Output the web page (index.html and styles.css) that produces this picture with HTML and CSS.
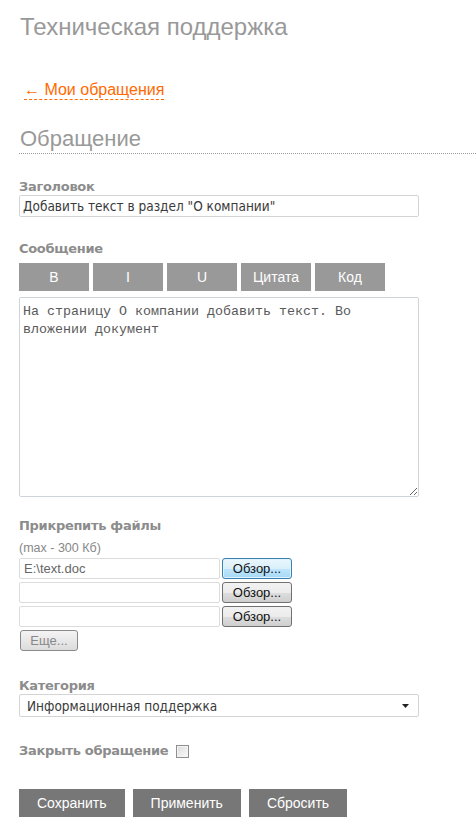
FILE: index.html
```html
<!DOCTYPE html>
<html lang="ru">
<head>
<meta charset="utf-8">
<title>Техническая поддержка</title>
<link rel="stylesheet" href="styles.css">
</head>
<body>
<div class="page">
  <h1 class="title">Техническая поддержка</h1>
  <a class="back" href="#">← Мои обращения</a>
  <h2 class="section">Обращение</h2>

  <div class="field f-title">
    <label class="label">Заголовок</label>
    <input class="text" type="text" value="Добавить текст в раздел &quot;О компании&quot;">
  </div>

  <div class="field msg">
    <label class="label">Сообщение</label>
    <div class="toolbar">
      <button class="tb" type="button">B</button>
      <button class="tb" type="button">I</button>
      <button class="tb" type="button">U</button>
      <button class="tb" type="button">Цитата</button>
      <button class="tb" type="button">Код</button>
    </div>
    <textarea class="area">На страницу О компании добавить текст. Во вложении документ</textarea>
  </div>

  <div class="field files">
    <label class="label">Прикрепить файлы</label>
    <div class="hint">(max - 300 Кб)</div>
    <div class="frow"><span class="fname">E:\text.doc</span><span class="browse focus">Обзор...</span></div>
    <div class="frow"><span class="fname"></span><span class="browse">Обзор...</span></div>
    <div class="frow"><span class="fname"></span><span class="browse">Обзор...</span></div>
    <span class="more">Еще...</span>
  </div>

  <div class="field cat">
    <label class="label">Категория</label>
    <div class="select">
      <span>Информационная поддержка</span>
      <svg class="caret" width="7" height="4" viewBox="0 0 7 4"><path d="M0 0h7L3.5 4z" fill="#222"/></svg>
    </div>
  </div>

  <div class="close">
    <span class="label">Закрыть обращение</span>
    <span class="check"></span>
  </div>

  <div class="actions">
    <button class="act" type="button">Сохранить</button>
    <button class="act" type="button">Применить</button>
    <button class="act" type="button">Сбросить</button>
  </div>
</div>
</body>
</html>
```

FILE: styles.css
```css
* { box-sizing: border-box; }
body {
  margin: 0;
  background: #fff;
  font-family: "DejaVu Sans Condensed", "DejaVu Sans", sans-serif;
  color: #888;
}
.page {
  padding: 0 0 20px 19px;
}
.title {
  margin: 13px 0 0 1px;
  font: normal 24px/28px "Liberation Sans", Arial, sans-serif;
  color: #999;
}
.back {
  display: inline-block;
  margin: 40px 0 0 5px;
  font: 16px/18px "Liberation Sans", Arial, sans-serif;
  color: #ff6a00;
  text-decoration: none;
  border-bottom: 1px dashed #ff6a00;
}
.section {
  margin: 26px 0 0 0;
  padding: 0 0 1px 1px;
  font: normal 22px/26px "Liberation Sans", Arial, sans-serif;
  color: #999;
  border-bottom: 1px dotted #999;
}
.field { display: flex; flex-direction: column; align-items: flex-start; }
.label {
  display: block;
  font: bold 13px/16px "DejaVu Sans", sans-serif;
  letter-spacing: -0.3px;
  color: #8c8c8c;
}
.f-title { margin-top: 25px; }
.text {
  width: 400px;
  height: 22px;
  margin: 0;
  padding: 0 3px;
  border: 1px solid #d4d4d4;
  border-radius: 2px;
  font: 13.5px "DejaVu Sans Condensed", "DejaVu Sans", sans-serif;
  color: #3a3a3a;
  outline: none;
}
.msg { margin-top: 24px; }
.toolbar {
  display: flex;
  gap: 4px;
  margin-top: 6px;
}
.tb {
  width: 70px;
  height: 28px;
  margin: 0;
  padding: 0;
  border: 0;
  background: #999;
  color: #fff;
  font: 14px/28px "Liberation Sans", Arial, sans-serif;
}
.area {
  width: 400px;
  height: 200px;
  margin: 6px 0 0;
  padding: 5px 3px;
  border: 1px solid #cfd3da;
  border-radius: 2px;
  font: 13.333px/18px "Liberation Mono", "Courier New", monospace;
  color: #5a5a5a;
  resize: both;
  outline: none;
}
.files { margin-top: 21px; }
.hint {
  font: 12.5px/16px "Liberation Sans", Arial, sans-serif;
  color: #888;
  margin-top: 6px;
  margin-bottom: 2px;
}
.frow {
  display: flex;
  gap: 2px;
  height: 24px;
  align-items: flex-start;
}
.fname {
  width: 201px;
  height: 21px;
  border: 1px solid #dcdcdc;
  border-radius: 2px;
  padding: 0 4px;
  font: 13px/19px "Liberation Sans", Arial, sans-serif;
  color: #666;
}
.browse {
  width: 70px;
  height: 21px;
  border: 1px solid #707070;
  border-radius: 3px;
  background: linear-gradient(#f2f2f2 0%, #ebebeb 50%, #dddddd 51%, #cfcfcf 100%);
  font: 13px/19px "Liberation Sans", Arial, sans-serif;
  color: #111;
  text-align: center;
}
.browse.focus {
  border-color: #3c7fb1;
  background: linear-gradient(#eaf6fd 0%, #d9f0fc 50%, #bee6fd 51%, #a7d9f5 100%);
  box-shadow: inset 0 0 0 1px #e0f2fb;
}
.more {
  margin: 0 0 0 1px;
  width: 58px;
  height: 21px;
  border: 1px solid #8a8a8a;
  border-radius: 3px;
  background: linear-gradient(#f4f4f4, #dcdcdc);
  font: 13px/19px "Liberation Sans", Arial, sans-serif;
  color: #888;
  text-align: center;
}
.cat { margin-top: 27px; }
.select {
  width: 400px;
  height: 23px;
  border: 1px solid #d4d4d4;
  border-radius: 2px;
  display: flex;
  align-items: center;
  justify-content: space-between;
  padding: 0 9px 0 7px;
  font: 13.5px "DejaVu Sans Condensed", "DejaVu Sans", sans-serif;
  color: #3a3a3a;
}
.close {
  display: flex;
  align-items: center;
  gap: 8px;
  margin-top: 26px;
  height: 16px;
}
.check {
  width: 13px;
  height: 13px;
  border: 1px solid #8f8f8f;
  background: linear-gradient(135deg, #dcdcdc, #fbfbfb);
  box-shadow: inset 0 0 0 1px #f4f4f4;
}
.actions {
  display: flex;
  gap: 8px;
  margin-top: 30px;
}
.act {
  height: 28px;
  margin: 0;
  padding: 0 18px;
  border: 0;
  background: #777;
  color: #fff;
  font: 14px/28px "Liberation Sans", Arial, sans-serif;
}
```
